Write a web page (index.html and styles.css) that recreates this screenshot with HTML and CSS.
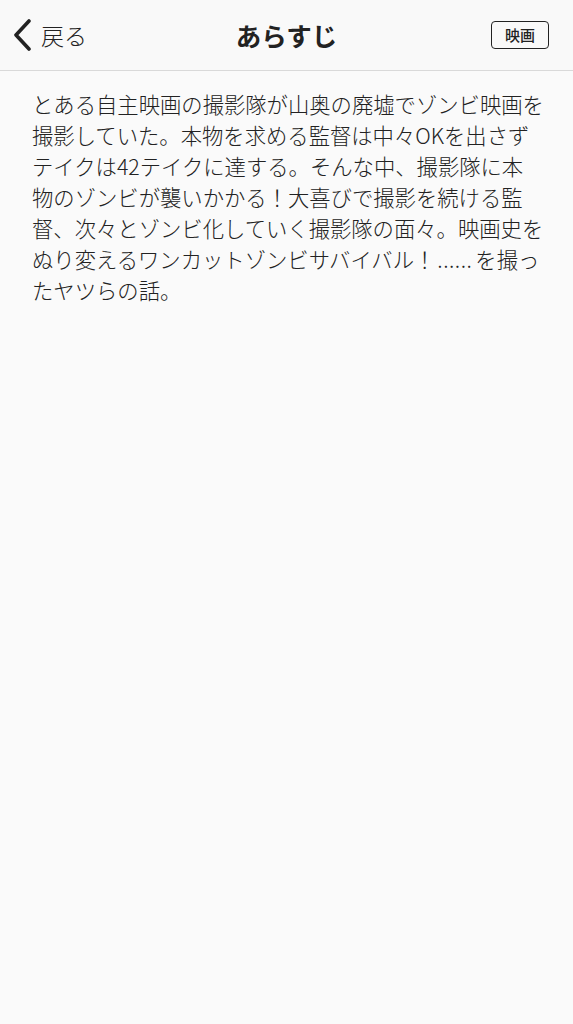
FILE: index.html
```html
<html>
  <head>
    <meta charset="utf-8">
    <link rel="stylesheet" href="styles.css">
    <title>あらすじ</title>
  </head>
  <body>
    <div class="navbar">
      <a class="nav-back">
        <svg class="chevron" width="20" height="32" viewBox="0 0 20 32">
          <polyline points="17,2 4,16 17,30" fill="none" stroke="#222" stroke-width="3.6" stroke-linecap="round" stroke-linejoin="round"/>
        </svg>
        <span class="back-label">戻る</span>
      </a>
      <div class="nav-title">あらすじ</div>
      <div class="nav-right">
        <span class="tag-button">映画</span>
      </div>
    </div>

    <div class="story">とある自主映画の撮影隊が山奥の廃墟でゾンビ映画を<br>撮影していた。本物を求める監督は中々OKを出さず<br>テイクは42テイクに達する。そんな中、撮影隊に本<br>物のゾンビが襲いかかる！大喜びで撮影を続ける監<br>督、次々とゾンビ化していく撮影隊の面々。映画史を<br>ぬり変えるワンカットゾンビサバイバル！<span class="dots">......</span>を撮っ<br>たヤツらの話。</div>
  </body>
</html>
```

FILE: styles.css
```css
body{
  margin: 0;
  background: #fafafa;
  color: #222;
  font-family: "Noto Sans CJK JP", "Noto Sans", sans-serif;
}
.navbar{
  display: grid;
  grid-template-columns: 1fr auto 1fr;
  align-items: center;
  height: 70px;
  border-bottom: 1px solid #d9d9d9;
  background: #f9f9f9;
}
.nav-back{
  display: flex;
  align-items: center;
  padding-left: 12px;
  color: #222;
}
.nav-back .chevron{
  display: block;
  margin-right: 9px;
}
.back-label{
  font-size: 23px;
  font-weight: 300;
  line-height: 1;
}
.nav-title{
  font-size: 25.5px;
  font-weight: 700;
  line-height: 1;
}
.nav-right{
  display: flex;
  justify-content: flex-end;
  padding-right: 24px;
}
.tag-button{
  display: inline-block;
  width: 56px;
  height: 26px;
  line-height: 26px;
  text-align: center;
  border: 1.5px solid #222;
  border-radius: 4px;
  font-size: 15px;
  font-weight: 500;
}
.story{
  padding: 17px 20px 0 32px;
  font-size: 21.33px;
  line-height: 31px;
  font-weight: 300;
  color: #222;
  white-space: nowrap;
}
.story .dots{
  letter-spacing: 0.5px;
  margin: 0 3px 0 2px;
}
```
